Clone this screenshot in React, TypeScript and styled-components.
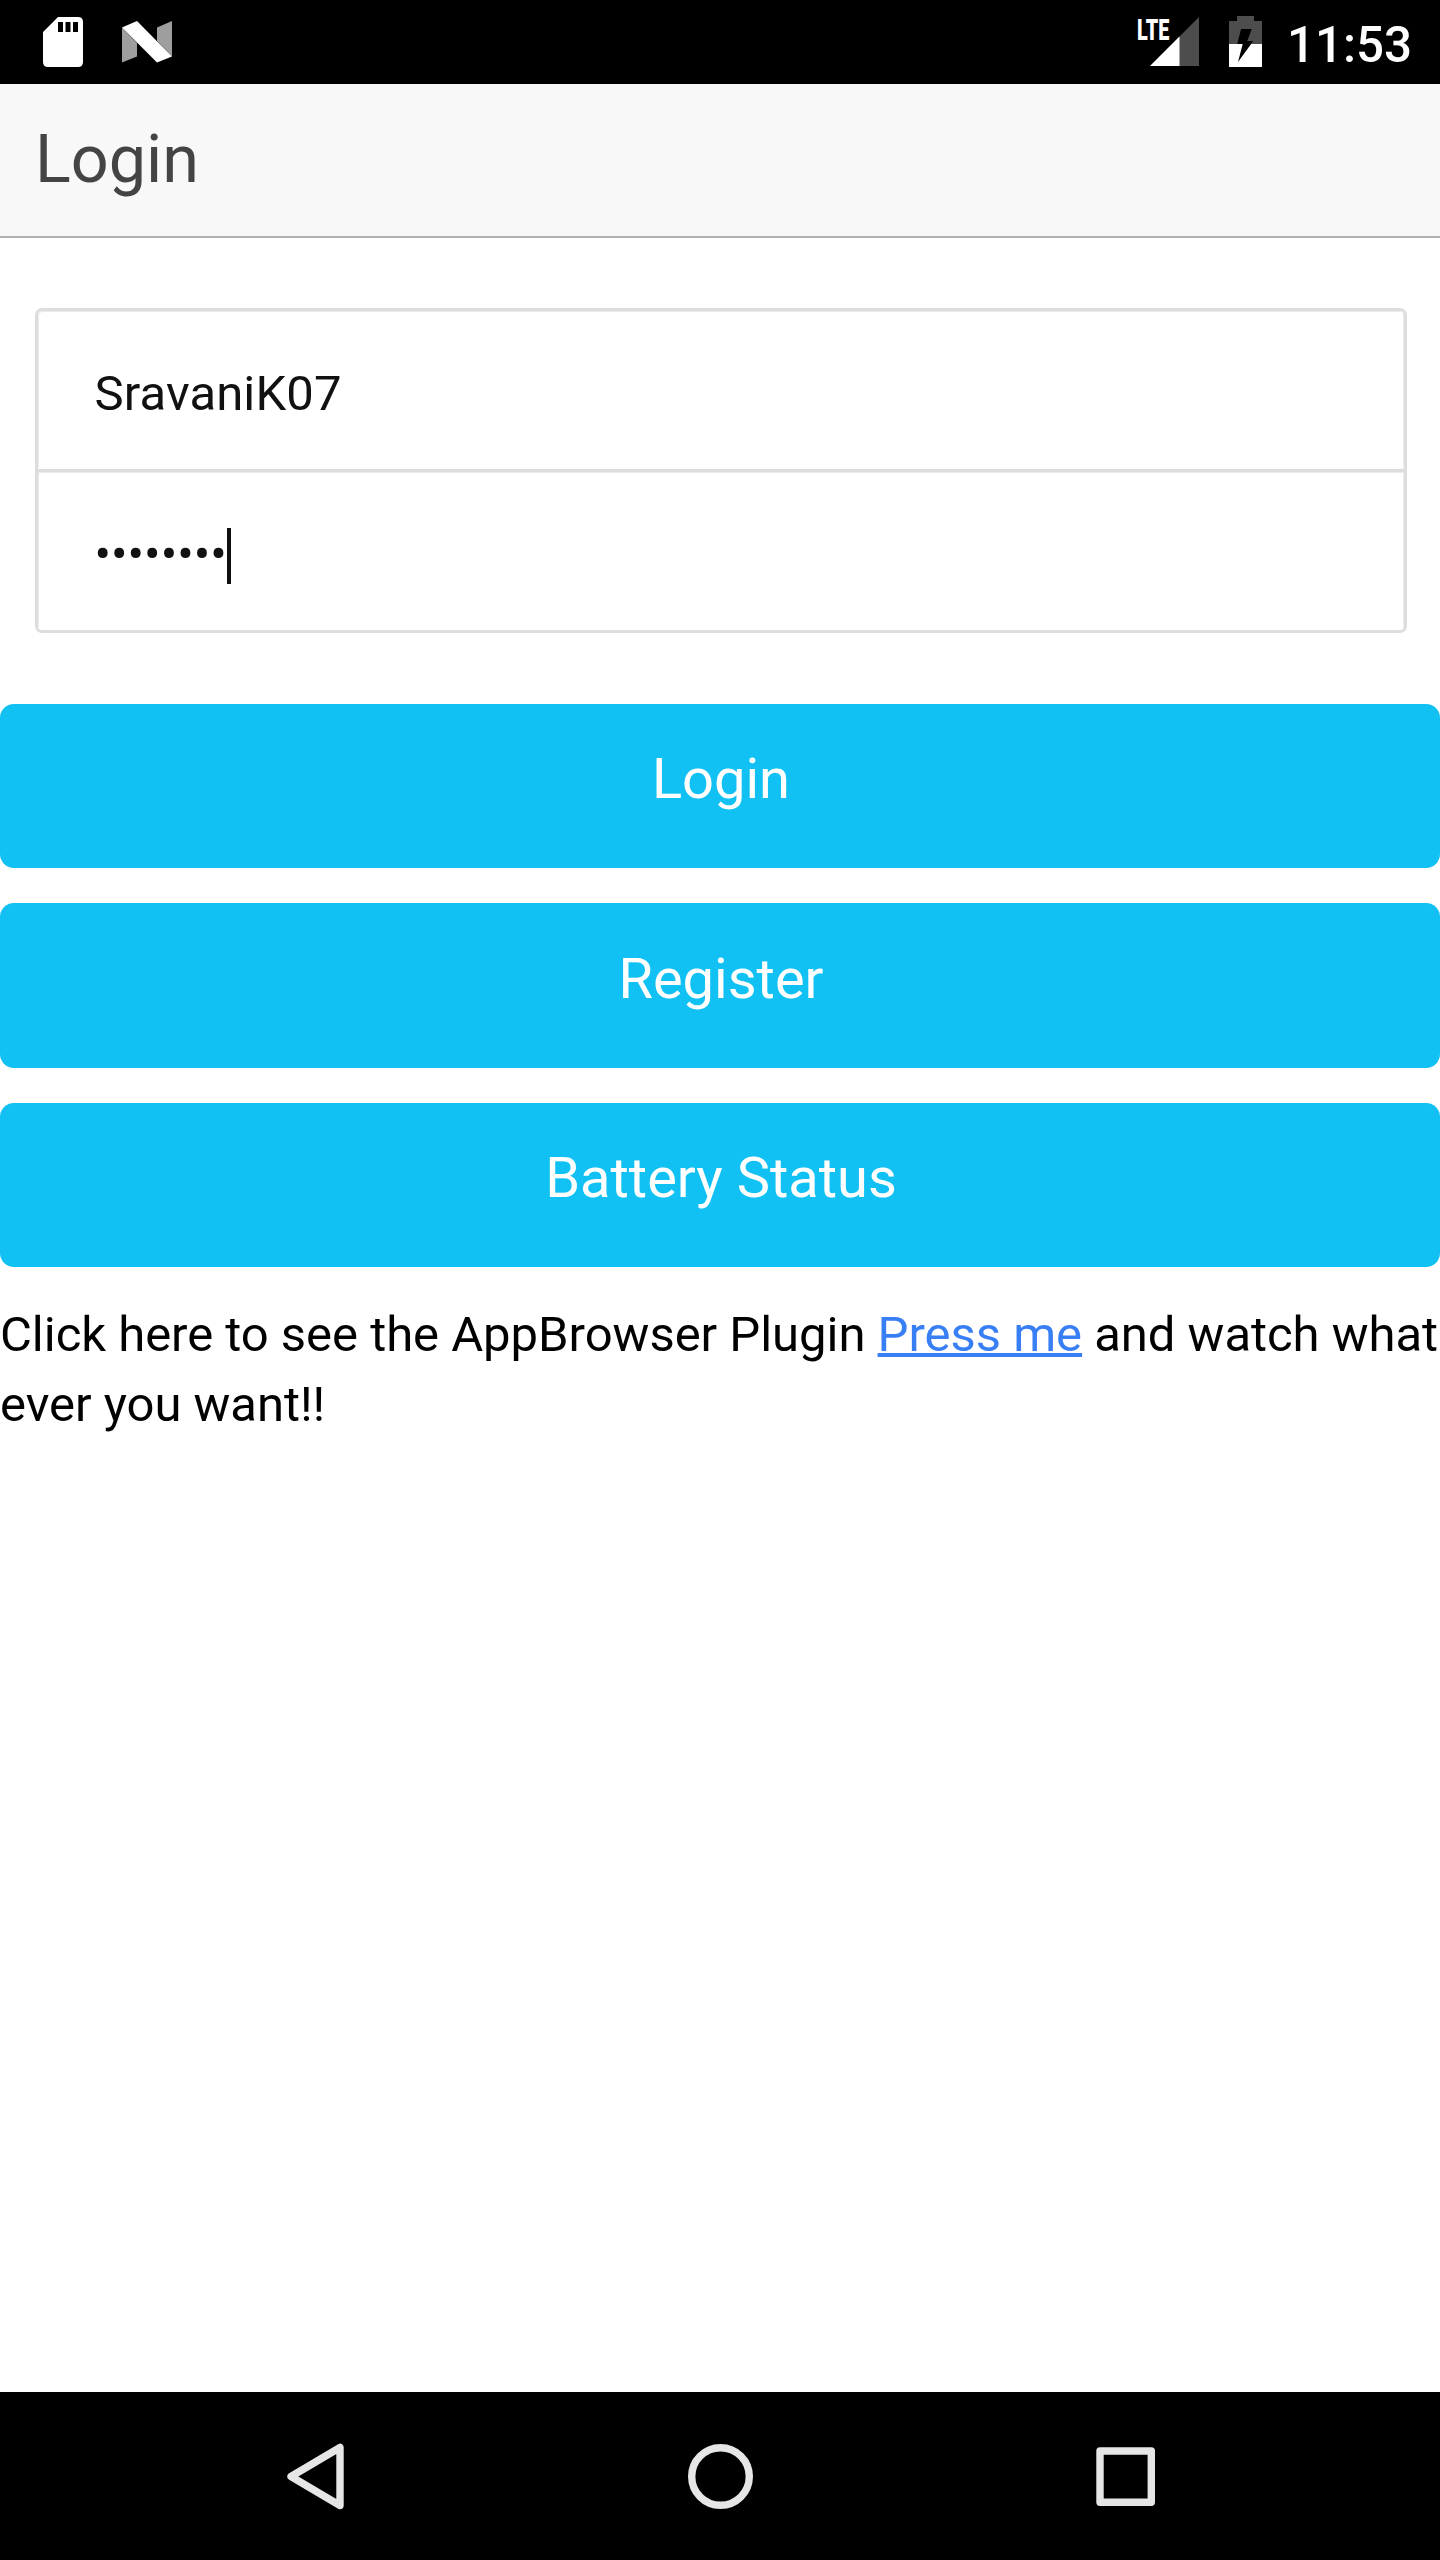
import React from "react";
import styled, { createGlobalStyle } from "styled-components";

const Global = createGlobalStyle`
  *, *::before, *::after { box-sizing: border-box; }
  html, body { margin: 0; padding: 0; background: #fff; }
`;

const Screen = styled.div`
  display: flex;
  flex-direction: column;
  width: 1440px;
  height: 2560px;
  overflow: hidden;
  background: #fff;
  color: #000;
  font-family: Roboto, "Noto Sans", sans-serif;
`;

const StatusBar = styled.header`
  display: flex;
  justify-content: space-between;
  flex: 0 0 84px;
  padding: 0 29px 0 43px;
  background: #000;
  color: #fff;
`;

const StatusGroup = styled.div<{ $gap: number }>`
  display: flex;
  align-items: flex-start;
  gap: ${(p) => p.$gap}px;
  padding-top: 16px;
`;

const StatusIcon = styled.svg`
  display: block;
  flex: none;
`;

const Signal = styled.div`
  position: relative;
  width: 61px;
  height: 51px;
`;

const NetworkType = styled.span`
  position: absolute;
  left: -1px;
  top: 0;
  font-size: 30px;
  line-height: 27px;
  font-weight: 900;
  transform: scaleX(0.66);
  transform-origin: 0 0;
`;

const SignalIcon = styled(StatusIcon)`
  margin: 1px 0 0 12px;
`;

const Clock = styled.time`
  width: 124px;
  margin-left: -5px;
  font-size: 49.3px;
  line-height: 59px;
  font-weight: 500;
  white-space: nowrap;
`;

const TitleBar = styled.div`
  flex: 0 0 154px;
  padding: 0 35px;
  background: #f8f8f8;
  border-bottom: 2px solid #b2b2b2;
`;

const Title = styled.h1`
  margin: 0;
  font-size: 66.5px;
  line-height: 150px;
  font-weight: 400;
  color: #444;
`;

const Content = styled.main`
  display: flex;
  flex-direction: column;
  flex: 1;
`;

const FieldList = styled.form`
  display: flex;
  flex-direction: column;
  margin: 70px 33px 70.5px 35px;
  border: 3px solid #ddd;
  border-radius: 7px;
`;

const Field = styled.label<{ $tracking?: number }>`
  display: flex;
  align-items: center;
  height: 158px;
  padding: 7px 56.5px 0;
  font-size: 49px;
  letter-spacing: ${(p) => p.$tracking ?? 0}px;
  color: #111;
  border-radius: 4px;
  box-shadow: inset 1px 1px #eaeaea, inset -1px 0 #eaeaea;

  & + & {
    height: 161px;
    border-top: 3px solid #ddd;
    border-radius: 0;
  }
`;

const Value = styled.span`
  line-height: 57px;
`;

const Caret = styled.span`
  width: 3.5px;
  height: 56px;
  margin: 3px 0 0 0.5px;
  background: #111;
`;

const Actions = styled.div`
  display: flex;
  flex-direction: column;
  gap: 35px;
`;

const ActionButton = styled.button`
  display: block;
  height: 164.5px;
  padding: 0 0 12px 2px;
  border: 0;
  border-radius: 14px;
  background: #11c1f3;
  color: #fff;
  font: 400 56px/149px Roboto, "Noto Sans", sans-serif;
`;

const Note = styled.p`
  margin: 32.5px 0 0;
  font-size: 49px;
  line-height: 70px;
  letter-spacing: -0.03px;
`;

const NoteLink = styled.a`
  color: #387ef5;
  text-decoration: underline;
  text-decoration-thickness: 4px;
`;

const NavBar = styled.nav`
  display: flex;
  justify-content: center;
  align-items: center;
  gap: 305px;
  flex: 0 0 168px;
  background: #000;
`;

const NavIcon = styled.svg`
  display: block;
  width: 100px;
  height: 100px;
  fill: none;
  stroke: #e6e6e6;
  stroke-width: 7.4;
  stroke-linejoin: round;
`;

export default function App() {
  return (
    <Screen>
      <Global />
      <StatusBar>
        <StatusGroup $gap={38}>
          <StatusIcon width="41" height="52" viewBox="0 0 41 52">
            <path
              fill="#fff"
              fillRule="evenodd"
              d="M15 1H35Q40 1 40 6V46Q40 51 35 51H5Q0 51 0 46V16ZM15 6V16H20V6ZM22.5 6V16H27.5V6ZM30 6V16H35V6Z"
            />
          </StatusIcon>
          <StatusIcon width="50" height="51" viewBox="0 0 50 51">
            <path fill="#9e9e9e" d="M0 11.5L15 27V40.5L0 46.5ZM35 11.5L50 5V40.5L35 25Z" />
            <path fill="#fff" d="M0 11.5L15 5L50 40.5L35 46.5Z" />
          </StatusIcon>
        </StatusGroup>
        <StatusGroup $gap={30}>
          <Signal>
            <NetworkType>LTE</NetworkType>
            <SignalIcon width="49" height="49" viewBox="0 0 49 49">
              <path fill="#4d4d4d" d="M49 0V49H0Z" />
              <path fill="#fff" d="M29.5 19.5V49H0Z" />
            </SignalIcon>
          </Signal>
          <StatusIcon width="33" height="51" viewBox="0 0 33 51">
            <path fill="#4d4d4d" d="M0 5H8V0H25V5H33V28H0Z" />
            <path fill="#fff" d="M0 28H33V51H0Z" />
            <path fill="#000" d="M12 13H22.7L18.3 25H24.3L9 46L13.7 28H8.3Z" />
          </StatusIcon>
          <Clock>11:53</Clock>
        </StatusGroup>
      </StatusBar>
      <TitleBar>
        <Title>Login</Title>
      </TitleBar>
      <Content>
        <FieldList>
          <Field $tracking={0.12}>
            <Value>SravaniK07</Value>
          </Field>
          <Field>
            <Value>••••••••</Value>
            <Caret />
          </Field>
        </FieldList>
        <Actions>
          <ActionButton>Login</ActionButton>
          <ActionButton>Register</ActionButton>
          <ActionButton>Battery Status</ActionButton>
        </Actions>
        <Note>
          Click here to see the AppBrowser Plugin <NoteLink>Press me</NoteLink> and watch what ever you want!!
        </Note>
      </Content>
      <NavBar>
        <NavIcon viewBox="0 0 100 100">
          <path d="M75 21.5V79.5L26 50.5Z" />
        </NavIcon>
        <NavIcon viewBox="0 0 100 100">
          <circle cx="50.5" cy="50.5" r="28.8" />
        </NavIcon>
        <NavIcon viewBox="0 0 100 100">
          <rect x="25" y="25" width="51.3" height="51.3" />
        </NavIcon>
      </NavBar>
    </Screen>
  );
}
